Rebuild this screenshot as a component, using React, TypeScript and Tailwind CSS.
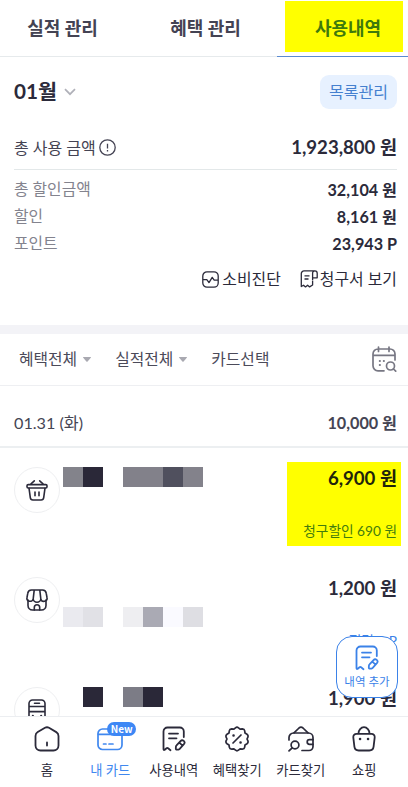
import type { ReactNode } from "react";

const App = () => {
  return (
    <div className="relative flex h-[787px] w-[408px] flex-col overflow-hidden bg-white font-[Lato,'Noto_Sans_CJK_KR',sans-serif] text-[#2b2a3a]">
      <Tabs />
      <Summary />
      <div className="h-[9px] shrink-0 bg-[#f3f3f7]" />
      <Filters />
      <div className="flex h-[62px] shrink-0 items-center justify-between border-b-2 border-[#eceff1] pl-[14px] pr-[11px] pt-[14px] text-[16.2px] text-[#454554]">
        <span>01.31 (화)</span>
        <span className="font-bold">10,000 원</span>
      </div>
      <div className="min-h-0 flex-1 overflow-hidden">
        {payments.map((payment) => (
          <PaymentRow key={payment.price} {...payment} />
        ))}
      </div>
      <BottomNav />
      <button className="absolute left-[336px] top-[636px] flex h-[62px] w-[62px] flex-col items-center rounded-[16px] border border-[#3b82e8] bg-white pt-[8px] text-[#3b82e8]">
        <NoteIcon className="h-[26px] w-[24px]" />
        <span className="mt-[2px] whitespace-nowrap text-[11.5px] leading-[17px]">내역 추가</span>
      </button>
    </div>
  );
};

const Tabs = () => (
  <div className="flex h-[57px] shrink-0 text-[18px] font-bold text-[#444353]">
    <div className="flex w-[134px] items-center justify-center border-b border-[#e6eaec] pr-[9px]">
      실적 관리
    </div>
    <div className="flex w-[143px] items-center justify-center border-b border-[#e6eaec]">
      혜택 관리
    </div>
    <div className="flex flex-1 justify-center border-b border-[#5b8bd2] pl-[8px] pr-[5px] pt-px">
      <div className="flex h-[51px] w-[118px] items-center justify-center bg-[#ffff00] pl-[8px] pt-[3px] text-[#3f7a0c]">
        사용내역
      </div>
    </div>
  </div>
);

const Summary = () => (
  <div className="flex h-[268px] shrink-0 flex-col pl-[14px] pr-[11px]">
    <div className="mt-[18px] flex h-[34px] items-center justify-between">
      <div className="flex items-center gap-[7px]">
        <span className="text-[20.7px] font-bold">01월</span>
        <svg width="12" height="8" viewBox="0 0 12 8" fill="none" stroke="#b0b1b9" strokeWidth="1.7">
          <path d="M1 1.2l5 5 5-5" />
        </svg>
      </div>
      <button className="h-[34px] w-[77px] rounded-[9px] bg-[#e7f1ff] text-[16px] text-[#4580cf]">
        목록관리
      </button>
    </div>
    <div className="mt-[17px] flex h-[44px] items-center justify-between border-b border-[#e3e8e9]">
      <div className="flex items-center gap-[3px] text-[16px] text-[#444353]">
        <span>총 사용 금액</span>
        <svg width="17" height="17" viewBox="0 0 17 17" fill="none" stroke="currentColor" strokeWidth="1.3">
          <circle cx="8.5" cy="8.5" r="7.7" />
          <path d="M8.5 4.8v4.6M8.5 10.9v1.5" />
        </svg>
      </div>
      <span className="pt-px text-[18.6px] font-bold">1,923,800 원</span>
    </div>
    <div className="mt-[6px] text-[15.8px] leading-[26px]">
      <SummaryLine label="총 할인금액" value="32,104 원" />
      <SummaryLine label="할인" value="8,161 원" />
      <SummaryLine label="포인트" value="23,943 P" />
    </div>
    <div className="mt-[11px] flex h-[22px] items-center justify-end gap-[19px] text-[15.9px]">
      <div className="flex items-center gap-[3px]">
        <svg width="17" height="17" viewBox="0 0 17 17" fill="none" stroke="currentColor" strokeWidth="1.3" strokeLinejoin="round">
          <rect x="0.8" y="0.8" width="15.4" height="15.4" rx="4.2" />
          <path d="M1 8.6h3.8l2.2 3 3.2-5.2 2 2.8H16" />
        </svg>
        <span>소비진단</span>
      </div>
      <div className="flex items-center gap-[2px]">
        <svg width="18" height="18" viewBox="0 0 18 18" fill="none" stroke="currentColor" strokeWidth="1.3" strokeLinejoin="round">
          <path d="M12.6 10.5V3.2a2.3 2.3 0 0 1 4.6 0v4.6h-4.6M14.9.9H4a2.7 2.7 0 0 0-2.7 2.7v12.9l2.2-1.3 2 1.7 2.1-1.7 2 1.7 3-1.9v-4" />
          <path d="M4.5 5.8h5M4.5 9h4" />
        </svg>
        <span>청구서 보기</span>
      </div>
    </div>
  </div>
);

type SummaryLineProps = {
  label: string;
  value: string;
};

const SummaryLine = ({ label, value }: SummaryLineProps) => (
  <div className="flex h-[27px] justify-between">
    <span className="text-[#83838e]">{label}</span>
    <span className="text-[16.2px] font-bold leading-[27px]">{value}</span>
  </div>
);

const Filters = () => (
  <div className="flex h-[52px] shrink-0 items-center border-b border-[#eeeff2] pb-[2px] pl-[19px] pr-[11px] text-[15.8px] text-[#4b4a59]">
    <span>혜택전체</span>
    <Caret />
    <span className="ml-[24px]">실적전체</span>
    <Caret />
    <span className="ml-[24px]">카드선택</span>
    <svg className="ml-auto" width="26" height="26" viewBox="0 0 26 26" fill="none" stroke="#777783" strokeWidth="1.7" strokeLinecap="round">
      <path d="M13 24.8H7a5 5 0 0 1-5-5V8a5 5 0 0 1 5-5h12a5 5 0 0 1 5 5v6M2 9.4h22M7.5 1v4.5M18 1v4.5" />
      <circle cx="19.5" cy="20" r="4" />
      <path d="M22.5 23l2.2 2.2" />
      <path d="M8.8 15h.1M12.8 15h.1M8.8 19h.1" strokeWidth="2.1" />
    </svg>
  </div>
);

const Caret = () => (
  <svg className="ml-[6px] mt-[2px]" width="8" height="5" viewBox="0 0 8 5" fill="#a9a9b1">
    <path d="M.4 0h7.2q.6.2.2.7L4.6 4.5q-.6.7-1.2 0L.2.7Q-.2.2.4 0z" />
  </svg>
);

type Payment = {
  icon: ReactNode;
  price: string;
  benefit?: string;
  highlighted?: boolean;
  name: ReactNode;
};

const PaymentRow = ({ icon, price, benefit, highlighted = false, name }: Payment) => (
  <div className="flex h-[110px] pl-[14px] pr-[7px] pt-[14px]">
    <div className="mt-[5px] flex h-[46px] w-[46px] items-center justify-center rounded-full border border-[#eeeff1]">
      {icon}
    </div>
    <div className="ml-[3px]">{name}</div>
    <div
      className={`ml-auto flex h-[84px] w-[114px] flex-col items-end justify-between pr-[4px] pt-[2px] ${highlighted ? "bg-[#ffff00]" : ""}`}
    >
      <span className={`text-[18.6px] font-bold leading-[28px] ${highlighted ? "text-[#20240b]" : ""}`}>{price}</span>
      <span className={`pb-[4px] text-[13.7px] leading-[22px] ${highlighted ? "text-[#437c0e]" : "text-[#3b82e8]"}`}>
        {benefit}
      </span>
    </div>
  </div>
);

const BasketIcon = () => (
  <svg width="22" height="22" viewBox="0 0 22 22" fill="none" stroke="currentColor" strokeWidth="1.6" strokeLinecap="round" strokeLinejoin="round">
    <rect x="1" y="5.6" width="20" height="3.4" rx="1.2" />
    <path d="M3 9.200l1.300 9.500a2.600 2.600 0 0 0 2.600 2.300h8.200a2.600 2.600 0 0 0 2.600-2.300L19 9.200M5 4.800l3.300-3M17 4.800l-3.300-3M9 13v3.800M13 13v3.800" />
  </svg>
);

const StoreIcon = () => (
  <svg width="22" height="22" viewBox="0 0 22 22" fill="none" stroke="currentColor" strokeWidth="1.6" strokeLinecap="round" strokeLinejoin="round">
    <path d="M2 11v5.500a4.500 4.500 0 0 0 4.500 4.500h9a4.500 4.500 0 0 0 4.500-4.500V11" />
    <path d="M5.500 1h11A3.700 3.700 0 0 1 20.200 4.200L21 8.500a3.100 3.100 0 0 1-6.200 1.300 3.800 3.400 0 0 1-7.600 0A3.100 3.100 0 0 1 1 8.500l.8-4.300A3.700 3.700 0 0 1 5.500 1zM8.200 1.200l-1 8.600M13.800 1.200l1 8.600" />
    <path d="M8.300 21v-2.600a2.700 2.700 0 0 1 5.400 0V21" />
  </svg>
);

const BusIcon = () => (
  <svg width="18" height="22" viewBox="0 0 18 22" fill="none" stroke="currentColor" strokeWidth="1.6" strokeLinecap="round">
    <path d="M1 21V4.500A3.500 3.500 0 0 1 4.500 1h9A3.500 3.500 0 0 1 17 4.500V21zM1 7.500h16M1 12.600h16M6.500 4.300h5" />
    <path d="M4.800 16.800h.1M13.100 16.800h.1" strokeWidth="2" />
  </svg>
);

const payments: Payment[] = [
  {
    icon: <BasketIcon />,
    price: "6,900 원",
    benefit: "청구할인 690 원",
    highlighted: true,
    name: (
      <div className="mt-[5px] flex h-5">
        <div className="w-5 bg-[#83838b]" />
        <div className="w-5 bg-[#2a2838]" />
        <div className="ml-5 w-10 bg-[#82818a]" />
        <div className="w-5 bg-[#50505e]" />
        <div className="w-5 bg-[#83828b]" />
      </div>
    ),
  },
  {
    icon: <StoreIcon />,
    price: "1,200 원",
    benefit: "적립 0 P",
    name: (
      <div className="mt-[35px] flex h-5">
        <div className="w-5 bg-[#eaeaef]" />
        <div className="w-5 bg-[#e1e1e6]" />
        <div className="ml-5 w-5 bg-[#eeeef1]" />
        <div className="w-5 bg-[#aaaab4]" />
        <div className="w-5 bg-[#fafaff]" />
        <div className="w-5 bg-[#dedee3]" />
      </div>
    ),
  },
  {
    icon: <BusIcon />,
    price: "1,900 원",
    name: (
      <div className="mt-[5px] flex h-5">
        <div className="ml-5 w-5 bg-[#2a2838]" />
        <div className="ml-5 w-5 bg-[#7c7c86]" />
        <div className="w-5 bg-[#2a2838]" />
      </div>
    ),
  },
];

const NoteIcon = ({ className = "" }: { className?: string }) => (
  <svg className={className} viewBox="0 0 24 26" fill="none" stroke="currentColor" strokeWidth="1.8" strokeLinecap="round" strokeLinejoin="round">
    <path d="M21.800 11V5.500A4 4 0 0 0 17.800 1.500H5.500a4 4 0 0 0-4 4V23q0 1.600 1.300.7l1.700-1.400q.8-.6 1.600 0l2.400 1.900" />
    <path d="M7 7.600h9M7 12.300h7.500" />
    <path d="M14.500 19.300l4-4.200a2.300 2.300 0 0 1 3.400 3.100l-4 4.500a2 2 0 0 1-1.400.8l-1.700.1a1 1 0 0 1-1-1.100l.1-1.800a2 2 0 0 1 .6-1.400zM17.300 16.600l3 2.800" />
  </svg>
);

const HomeIcon = () => (
  <svg width="26" height="26" viewBox="0 0 26 26" fill="none" stroke="currentColor" strokeWidth="1.8" strokeLinecap="round" strokeLinejoin="round">
    <path d="M11 1.800a4 4 0 0 1 4 0l7.300 4.300a4.500 4.500 0 0 1 2.200 3.900v9.500a5 5 0 0 1-5 5h-13a5 5 0 0 1-5-5V10a4.500 4.500 0 0 1 2.200-3.900zM13 16.500v3" />
  </svg>
);

const CardIcon = () => (
  <svg width="26" height="26" viewBox="0 0 26 26" fill="none" stroke="currentColor" strokeWidth="1.700" strokeLinecap="round">
    <rect x="1" y="3" width="24" height="20.500" rx="4.500" />
    <path d="M1.500 8.300h23" />
    <path d="M6.500 18h2.500M12 18h4" />
  </svg>
);

const CouponIcon = () => (
  <svg width="26" height="26" viewBox="0 0 26 26" fill="none" stroke="currentColor" strokeWidth="1.700" strokeLinecap="round" strokeLinejoin="round">
    <path d="M11.500 1.800q1.500-1.200 3 0l1.600 1.300 2.300-.2q2 .1 2.300 2l.3 2.200 2 1.200q1.600 1.200.8 3L23 13l.8 1.700q.8 1.800-.8 3l-2 1.200-.3 2.200q-.3 1.900-2.300 2l-2.300-.2-1.600 1.300q-1.500 1.200-3 0l-1.600-1.300-2.300.2q-2-.1-2.300-2L5 18.900l-2-1.200q-1.600-1.200-.8-3L3 13l-.8-1.700q-.8-1.800.8-3l2-1.200.3-2.200q.3-1.900 2.300-2l2.300.2z" />
    <path d="M17 9l-8 8" />
    <path d="M9.500 9.600h.1M16.500 16.500h.1" strokeWidth="2.500" />
  </svg>
);

const WalletIcon = () => (
  <svg width="28" height="26" viewBox="0 0 28 26" fill="none" stroke="currentColor" strokeWidth="1.700" strokeLinecap="round" strokeLinejoin="round">
    <path d="M2 14v-2.500A4.500 4.500 0 0 1 6.500 7h15a4.500 4.500 0 0 1 4.500 4.500v9a4 4 0 0 1-4 4h-7" />
    <path d="M7 6.800l5-4.800q2-1.700 4 0l5 4.800M26 13.700h-3.500a2.300 2.300 0 0 0 0 4.600H26" />
    <circle cx="8" cy="19" r="3.900" />
    <path d="M5.200 21.800l-3.200 3" />
  </svg>
);

const BagIcon = () => (
  <svg width="24" height="26" viewBox="0 0 24 26" fill="none" stroke="currentColor" strokeWidth="1.800" strokeLinecap="round" strokeLinejoin="round">
    <path d="M4.500 7.800h15a3.200 3.200 0 0 1 3.200 3.600l-1.100 9.300a4.300 4.300 0 0 1-4.300 3.800H6.700a4.300 4.300 0 0 1-4.300-3.800L1.300 11.400a3.200 3.200 0 0 1 3.200-3.600zM6.500 7.500a5.500 6.300 0 0 1 11 0" />
    <path d="M8 13h.1M16 13h.1" strokeWidth="2.500" />
  </svg>
);

const BottomNav = () => (
  <div className="grid h-[71px] shrink-0 grid-cols-6 border-t border-[#eceef1] bg-white pl-[15px] pr-[12px] text-[13.3px]">
    <NavItem label="홈" icon={<HomeIcon />} />
    <NavItem label="내 카드" icon={<CardIcon />} active />
    <NavItem label="사용내역" icon={<NoteIcon className="h-[26px] w-[24px]" />} />
    <NavItem label="혜택찾기" icon={<CouponIcon />} />
    <NavItem label="카드찾기" icon={<WalletIcon />} />
    <NavItem label="쇼핑" icon={<BagIcon />} />
  </div>
);

type NavItemProps = {
  label: string;
  icon: ReactNode;
  active?: boolean;
};

const NavItem = ({ label, icon, active = false }: NavItemProps) => (
  <div className={`flex flex-col items-center pt-[9px] ${active ? "text-[#4088ef]" : ""}`}>
    <div className="relative h-[26px]">
      {icon}
      {active && (
        <span className="absolute left-[10px] top-[-4px] h-[14px] w-[29px] rounded-full bg-[#3d87f5] text-center font-['Noto_Sans_CJK_KR',sans-serif] text-[10px] font-bold leading-[14px] text-white">
          New
        </span>
      )}
    </div>
    <span className="mt-[8px] whitespace-nowrap leading-[20px]">{label}</span>
  </div>
);

export default App;
